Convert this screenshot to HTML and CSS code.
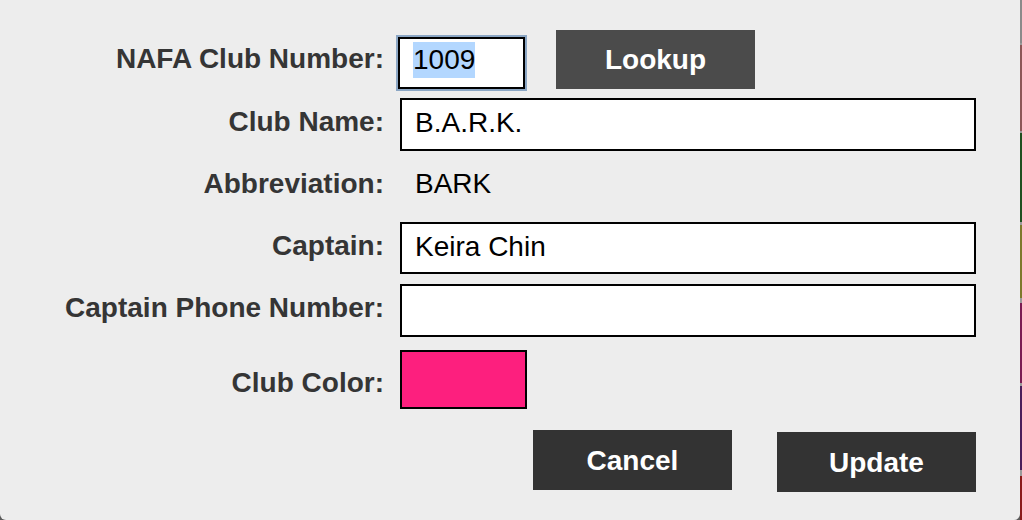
FILE: index.html
```html
<!DOCTYPE html>
<html>
<head>
<meta charset="utf-8">
<link rel="stylesheet" href="styles.css">
</head>
<body>
<div class="screen">
  <div class="dialog">
    <div class="form">
      <div class="row row-top">
        <div class="label label-top">NAFA Club Number:</div>
        <div class="lookup-group">
          <div class="field field-number"><span class="selected">1009</span></div>
          <div class="btn btn-lookup">Lookup</div>
        </div>
      </div>
      <div class="row row-name">
        <div class="label">Club Name:</div>
        <div class="field">B.A.R.K.</div>
      </div>
      <div class="row row-abbr">
        <div class="label">Abbreviation:</div>
        <div class="value">BARK</div>
      </div>
      <div class="row row-captain">
        <div class="label">Captain:</div>
        <div class="field field-52">Keira Chin</div>
      </div>
      <div class="row row-phone">
        <div class="label">Captain Phone Number:</div>
        <div class="field"></div>
      </div>
      <div class="row row-color">
        <div class="label label-low">Club Color:</div>
        <div class="swatch"></div>
      </div>
      <div class="actions">
        <div class="btn btn-dark">Cancel</div>
        <div class="btn btn-dark btn-update">Update</div>
      </div>
    </div>
  </div>
  <div class="strip">
    <div class="band b-gray"></div>
    <div class="band sep s2"></div>
    <div class="band b-brown"></div>
    <div class="band sep s2"></div>
    <div class="band b-green"></div>
    <div class="band sep s3"></div>
    <div class="band b-olive"></div>
    <div class="band sep s5"></div>
    <div class="band b-magenta"></div>
    <div class="band sep s3"></div>
    <div class="band b-purple"></div>
    <div class="band sep s6"></div>
    <div class="band b-red"></div>
  </div>
</div>
</body>
</html>
```

FILE: styles.css
```css
html, body {
  margin: 0;
  padding: 0;
  background: #5a5a5a;
}

body {
  font-family: "Liberation Sans", Arial, sans-serif;
  font-size: 28px;
}

.screen {
  display: flex;
  width: 1022px;
  height: 520px;
  overflow: hidden;
}

.dialog {
  width: 1020px;
  height: 520px;
  background: #ededed;
  border-radius: 0 0 6px 6px;
  flex: none;
}

.form {
  width: 976px;
  padding-top: 30px;
  display: flex;
  flex-direction: column;
}

.row {
  display: grid;
  grid-template-columns: 384px 576px;
  column-gap: 16px;
  align-items: center;
}

.label {
  font-weight: bold;
  color: #353535;
  text-align: right;
  line-height: 31px;
  padding-bottom: 6px;
  white-space: nowrap;
}

.row-top {
  align-items: start;
}

.label-top {
  margin-top: 13px;
  padding-bottom: 0;
}

.label-low {
  padding-bottom: 0;
  padding-top: 5px;
}

.lookup-group {
  display: flex;
  align-items: flex-start;
}

.field {
  box-sizing: border-box;
  height: 53px;
  background: #ffffff;
  border: 2px solid #000000;
  padding: 0 13px 4px;
  display: flex;
  align-items: center;
  line-height: 31px;
  color: #000000;
}

.field-52 {
  height: 52px;
}

.field-number {
  width: 127px;
  height: 52px;
  margin-top: 7px;
  margin-left: -2px;
  align-items: flex-start;
  padding: 3px 0 0 13px;
  box-shadow: 0 0 0 2px #8ba6c4;
}

.selected {
  display: inline-block;
  height: 36px;
  line-height: 36px;
  background: #b3d7ff;
}

.btn {
  box-sizing: border-box;
  width: 199px;
  height: 60px;
  display: flex;
  align-items: center;
  justify-content: center;
  color: #ffffff;
  font-weight: bold;
  line-height: 31px;
}

.btn-lookup {
  height: 59px;
  margin-left: 31px;
  background: #4b4b4b;
}

.btn-dark {
  background: #333333;
}

.row-name {
  margin-top: 9px;
}

.row-abbr {
  margin-top: 17px;
  align-items: start;
}

.value {
  line-height: 31px;
  padding-left: 15px;
  color: #000000;
}

.row-captain {
  margin-top: 17px;
}

.row-phone {
  margin-top: 10px;
}

.row-color {
  margin-top: 13px;
}

.swatch {
  box-sizing: border-box;
  width: 127px;
  height: 59px;
  background: #fd1f7e;
  border: 2px solid #000000;
}

.actions {
  margin-top: 21px;
  display: flex;
  justify-content: flex-end;
  align-items: flex-start;
  gap: 45px;
}

.btn-update {
  margin-top: 2px;
}

.strip {
  width: 2px;
  height: 520px;
  display: flex;
  flex-direction: column;
  flex: none;
}

.band { flex: none; }
.sep { background: #9a9a9a; }
.s2 { height: 2px; }
.s3 { height: 3px; }
.s5 { height: 5px; }
.s6 { height: 6px; }
.b-gray { height: 43px; background: #8a8a8a; }
.b-brown { height: 86px; background: #8c5656; }
.b-green { height: 89px; background: #1f4f1f; }
.b-olive { height: 73px; background: #7d792c; }
.b-magenta { height: 80px; background: #7a1b52; }
.b-purple { height: 84px; background: #4a1c5a; }
.b-red { height: 44px; background: #8a1a1a; }
```
